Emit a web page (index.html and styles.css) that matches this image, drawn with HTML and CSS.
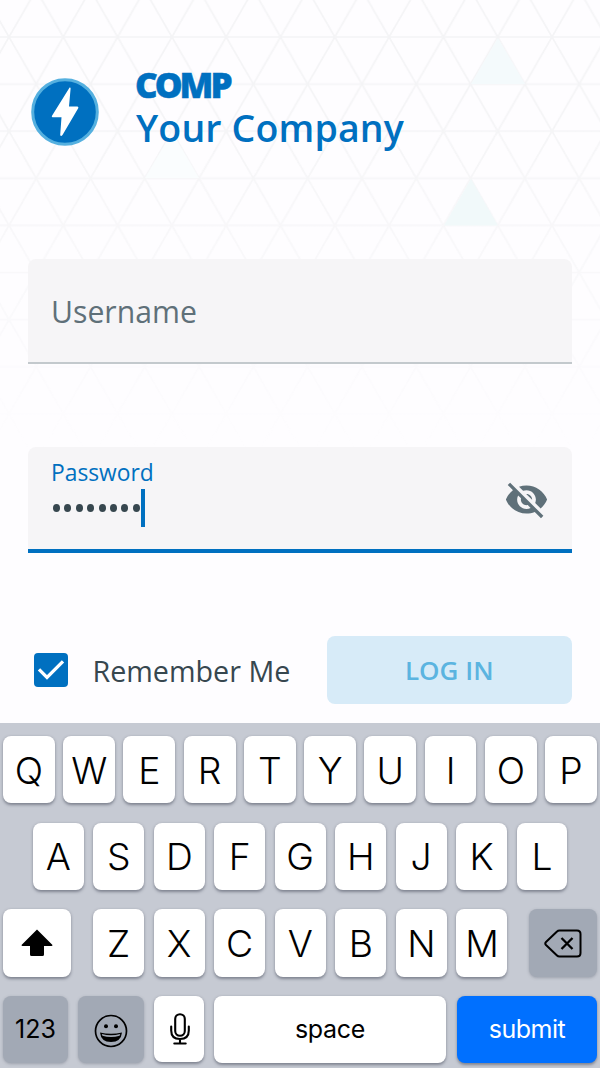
FILE: index.html
```html
<!DOCTYPE html>
<html lang="en">
<head>
<meta charset="utf-8">
<title>Log in</title>
<link rel="stylesheet" href="styles.css">
</head>
<body>
<div class="screen">
  <svg class="backdrop" width="600" height="450" aria-hidden="true">
    <defs>
      <pattern id="mesh" x="9" y="37" width="54.3" height="94.2" patternUnits="userSpaceOnUse">
        <path d="M0 0H54.3M0 47.1H54.3M0 94.2H54.3M0 0L54.3 94.2M54.3 0L0 94.2" fill="none" stroke="#f4f4f6" stroke-width="1.7"/>
      </pattern>
      <linearGradient id="fade" x1="0" y1="0" x2="0" y2="1">
        <stop offset="0" stop-color="#fff"/>
        <stop offset=".25" stop-color="#fff"/>
        <stop offset="1" stop-color="#fff" stop-opacity="0"/>
      </linearGradient>
      <mask id="fade-mask"><rect width="600" height="450" fill="url(#fade)"/></mask>
    </defs>
    <rect width="600" height="450" fill="url(#mesh)" mask="url(#fade-mask)"/>
    <path d="M498 38L525 84H471Z" fill="#f4fafc"/>
    <path d="M471 179L498 225.500H444Z" fill="#f1f9fa"/>
    <path d="M172 132L199 178H145Z" fill="#fafdfe"/>
  </svg>

  <header class="brand">
    <svg class="brand-mark" viewBox="0 0 68 68" aria-hidden="true">
      <circle cx="34" cy="34" r="32.300" fill="#0070c0" stroke="#55b0df" stroke-width="3"/>
      <path d="M38.300 10C38.800 9.200 39.700 9.500 39.600 10.500L38 28.500H46.300Q48 28.500 47.200 30.200L31.500 57Q29.800 59 29.200 57L30.500 39.300H21.800Q20.200 39.300 21 37.700Z" fill="#fff"/>
    </svg>
    <div class="brand-text">
      <div class="brand-short">COMP</div>
      <div class="brand-name">Your Company</div>
    </div>
  </header>

  <main class="form">
    <div class="field"><span class="placeholder">Username</span></div>
    <div class="field field-active">
      <div class="field-body">
        <span class="field-label">Password</span>
        <div class="entry">
          <div class="dots"><i></i><i></i><i></i><i></i><i></i><i></i><i></i><i></i></div>
          <span class="caret"></span>
        </div>
      </div>
      <svg class="eye" viewBox="0 0 24 24" fill="#5f7079" aria-label="Show password">
        <path d="M12 7c2.760 0 5 2.240 5 5 0 .65-.13 1.260-.36 1.830l2.920 2.920c1.510-1.260 2.700-2.890 3.430-4.750-1.730-4.390-6-7.500-11-7.500-1.400 0-2.740.25-3.980.7l2.160 2.160C10.740 7.130 11.350 7 12 7zM2 4.270l2.280 2.280.46.46C3.080 8.300 1.780 10.020 1 12c1.730 4.390 6 7.500 11 7.500 1.550 0 3.030-.3 4.380-.84l.42.42L19.730 22 21 20.730 3.270 3 2 4.270zM7.530 9.800l1.550 1.550c-.05.21-.08.43-.08.65 0 1.660 1.340 3 3 3 .22 0 .44-.03.65-.08l1.550 1.550c-.67.33-1.410.53-2.200.53-2.760 0-5-2.240-5-5 0-.79.2-1.530.53-2.200zm4.310-.78l3.150 3.150.02-.16c0-1.660-1.340-3-3-3l-.17.01z"/>
      </svg>
    </div>
    <div class="actions">
      <span class="checkbox">
        <svg viewBox="0 0 34 34" fill="none" stroke="#fff" stroke-width="3.300"><path d="M5 16.300L13 24.300L29 8.300"/></svg>
      </span>
      <span class="remember">Remember Me</span>
      <button class="login">LOG IN</button>
    </div>
  </main>

  <section class="keyboard">
    <div class="row row-top">
      <span class="key">Q</span><span class="key">W</span><span class="key">E</span><span class="key">R</span><span class="key">T</span><span class="key">Y</span><span class="key">U</span><span class="key">I</span><span class="key">O</span><span class="key">P</span>
    </div>
    <div class="row row-home">
      <span class="key">A</span><span class="key">S</span><span class="key">D</span><span class="key">F</span><span class="key">G</span><span class="key">H</span><span class="key">J</span><span class="key">K</span><span class="key">L</span>
    </div>
    <div class="row row-lower">
      <span class="key key-shift"><svg width="32" height="28" viewBox="0 0 32 28"><path d="M16 .5L31.500 16Q31.500 17 30.500 17H23V25.500Q23 27 21.500 27H10.500Q9 27 9 25.500V17H1.500Q.5 17 .5 16Z"/></svg></span>
      <div class="letters">
        <span class="key">Z</span><span class="key">X</span><span class="key">C</span><span class="key">V</span><span class="key">B</span><span class="key">N</span><span class="key">M</span>
      </div>
      <span class="key key-gray key-delete"><svg width="38" height="29" viewBox="0 0 38 29" fill="none" stroke="#000" stroke-width="2"><path d="M15.500 1.500H33Q36.500 1.500 36.500 5V24Q36.500 27.500 33 27.500H15.500Q14 27.500 13 26.500L2 16Q.5 14.500 2 13L13 2.500Q14 1.500 15.500 1.500Z"/><path d="M17.500 9L28.500 20M28.500 9L17.500 20" stroke-width="2.300"/></svg></span>
    </div>
    <div class="row row-bottom">
      <span class="key key-gray key-num">123</span>
      <span class="key key-gray key-emoji"><svg width="34" height="34" viewBox="0 0 34 34"><circle cx="17" cy="17" r="15.500" fill="none" stroke="#000" stroke-width="1.700"/><circle cx="12" cy="12.300" r="2"/><circle cx="22" cy="12.300" r="2"/><path d="M6 18.500Q17 21 28 18.500Q27 28 17 28Q7 28 6 18.500Z"/><path d="M7.800 20Q17 22.500 26.200 20L25.600 21.800Q17 24.300 8.400 21.800Z" fill="#a2a9b5"/></svg></span>
      <span class="key key-mic"><svg width="20" height="32" viewBox="0 0 20 32" fill="none" stroke="#000" stroke-width="2.100" stroke-linecap="round"><rect x="5.200" y="1.200" width="9.600" height="21.600" rx="4.800"/><path d="M1.200 13.500V17.500Q1.200 26 10 26Q18.800 26 18.800 17.500V13.500M10 26V30.500M4.300 30.500H15.700"/></svg></span>
      <span class="key key-space">space</span>
      <span class="key key-submit">submit</span>
    </div>
  </section>
</div>
</body>
</html>
```
FILE: styles.css
```css
* { box-sizing: border-box; }

body {
  margin: 0;
  background: #fefdff;
  font-family: "Open Sans", "Noto Sans", sans-serif;
}

.screen {
  position: relative;
  width: 600px;
  height: 1068px;
  overflow: hidden;
  display: flex;
  flex-direction: column;
}

.backdrop { position: absolute; left: 0; top: 0; }

.brand {
  position: relative;
  height: 259px;
  padding: 67px 0 0 31px;
  display: flex;
  align-items: flex-start;
  gap: 36px;
  color: #0070c0;
}
.brand-mark { width: 68px; height: 68px; margin-top: 11px; }
.brand-text { white-space: nowrap; }
.brand-short { height: 39px; font-size: 35px; line-height: 36px; font-weight: 800; letter-spacing: -3px; -webkit-text-stroke: .5px #0070c0; }
.brand-name { padding-left: 1px; font-size: 37.500px; line-height: 44px; font-weight: 600; letter-spacing: .15px; }

.form { position: relative; height: 464px; padding: 0 28px; }

.field {
  height: 105px;
  padding: 0 23px;
  display: flex;
  align-items: center;
  background: #f6f5f7;
  border-bottom: 2px solid #c3c9cd;
  border-radius: 8px 8px 0 0;
}
.placeholder { padding-top: 2px; font-size: 30.200px; color: #5f7079; }

.field-active {
  height: 106px;
  margin-top: 83px;
  align-items: flex-start;
  justify-content: space-between;
  border-bottom: 4px solid #0070c0;
}
.field-label { display: block; margin-top: 11px; font-size: 22.800px; line-height: 30px; padding-bottom: 1px; color: #0070c0; }
.entry { display: flex; align-items: center; height: 38px; gap: 1px; }
.dots { display: flex; gap: 4.400px; padding-left: 2px; }
.dots i { width: 7px; height: 8px; border-radius: 50%; background: #37474f; }
.caret { width: 4px; height: 38px; background: #0070c0; }
.eye { width: 45px; height: 45px; margin: 29.500px 0 0; }

.actions { display: flex; align-items: center; height: 68px; margin-top: 83px; padding-left: 6px; }
.checkbox { width: 34px; height: 34px; border-radius: 4px; background: #0070c0; }
.checkbox svg { display: block; }
.remember { margin-left: 24.500px; font-size: 28.700px; color: #37474f; white-space: nowrap; }
.login {
  width: 245.500px;
  height: 68px;
  margin-left: auto;
  padding: 0;
  border: 0;
  border-radius: 8px;
  background: #d7ebf8;
  color: #5bb4e0;
  font: 600 26px "Open Sans", sans-serif;
}

.keyboard {
  position: relative;
  height: 345px;
  padding: 13px 3px 0;
  display: flex;
  flex-direction: column;
  gap: 19.400px;
  background: #c6cad3;
  font-family: Inter, "Liberation Sans", sans-serif;
}
.row { display: flex; height: 67.300px; flex: none; }
.row-top { gap: 8.400px; }
.row-top .key { flex: 1; }
.row-home { padding: 0 29.500px 0 30px; gap: 9.600px; }
.row-home .key { flex: 1; }
.letters { display: flex; gap: 9.600px; width: 414.500px; margin: 0 21.500px 0 22px; }
.letters .key { flex: 1; }

.key {
  display: flex;
  align-items: center;
  justify-content: center;
  padding-top: 1px;
  border-radius: 8px;
  background: #fff;
  box-shadow: 0 1.500px 3px rgba(80, 85, 100, .6);
  color: #000;
  font-size: 37.300px;
  font-weight: 300;
}
.key-gray { background: #a2a9b5; box-shadow: 0 1px 3px rgba(80, 85, 100, .35); }
.key-shift, .key-delete { width: 68px; padding-top: 0; }

.row-bottom { gap: 10px; }
.row-bottom .key { padding: 0 0 2px; }
.key-num { width: 65px; font-size: 25px; font-weight: 400; }
.row-bottom .key-emoji { width: 66px; padding: 3px 0 0; }
.row-bottom .key-mic { width: 50px; height: 66px; padding: 0 0 0 2px; }
.key-space { width: 232px; font-size: 25px; font-weight: 400; letter-spacing: -.3px; }
.key-submit { width: 140px; margin-left: 1px; background: #0070ff; color: #fff; font-size: 25px; font-weight: 400; letter-spacing: -.5px; }
```
